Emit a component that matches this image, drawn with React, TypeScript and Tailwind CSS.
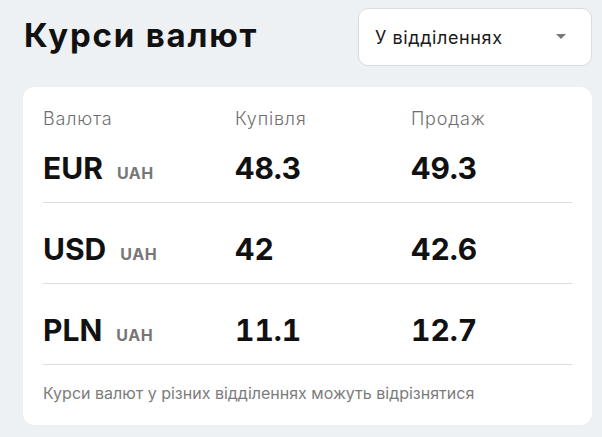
const rates = [
  { code: 'EUR', buy: '48.3', sell: '49.3' },
  { code: 'USD', buy: '42', sell: '42.6' },
  { code: 'PLN', buy: '11.1', sell: '12.7' },
];

export default function App() {
  return (
    <div
      className="w-[602px] h-[437px] bg-[#eef1f3] pl-[23px] pr-[10px] pt-[8px] text-[#111]"
      style={{ fontFamily: 'Inter, "Noto Sans", sans-serif' }}
    >
      <div className="flex items-start justify-between">
        <h1 className="mt-[7px] ml-[1px] text-[33px] leading-[40px] font-bold tracking-[1.8px]">
          Курси валют
        </h1>
        <button className="flex h-[58px] w-[234px] items-center justify-between rounded-[10px] border border-[#d9dcdf] bg-white pl-[16px] pr-[25px] text-[18px] tracking-[0.6px] text-[#1a1a1a]">
          <span>У відділеннях</span>
          <svg width="10" height="6" viewBox="0 0 10 6">
            <path d="M0 0h10L5 5z" fill="#777" />
          </svg>
        </button>
      </div>

      <div className="mt-[21px] rounded-[12px] bg-white px-[20px] pt-[20px] pb-[22px]">
        <div className="grid grid-cols-[192px_176px_1fr] text-[18px] leading-[24px] font-light tracking-[0.8px] text-[#6f6f6f]">
          <span>Валюта</span>
          <span>Купівля</span>
          <span>Продаж</span>
        </div>

        {rates.map((r, i) => (
          <div
            key={r.code}
            className={
              'grid grid-cols-[192px_176px_1fr] items-baseline border-b border-[#dcdcdc] pb-[16px] ' +
              (i === 0 ? 'pt-[19px]' : 'pt-[28px]')
            }
          >
            <div className="flex items-baseline gap-[14px]">
              <span className="text-[30px] leading-[36px] font-bold">{r.code}</span>
              <span className="text-[16px] font-bold tracking-[0.5px] text-[#777]">UAH</span>
            </div>
            <span className="text-[30px] leading-[36px] font-bold tabular-nums">{r.buy}</span>
            <span className="text-[30px] leading-[36px] font-bold tabular-nums">{r.sell}</span>
          </div>
        ))}

        <p className="mt-[18px] text-[16px] leading-[20px] text-[#7c7c7c]">
          Курси валют у різних відділеннях можуть відрізнятися
        </p>
      </div>
    </div>
  );
}
